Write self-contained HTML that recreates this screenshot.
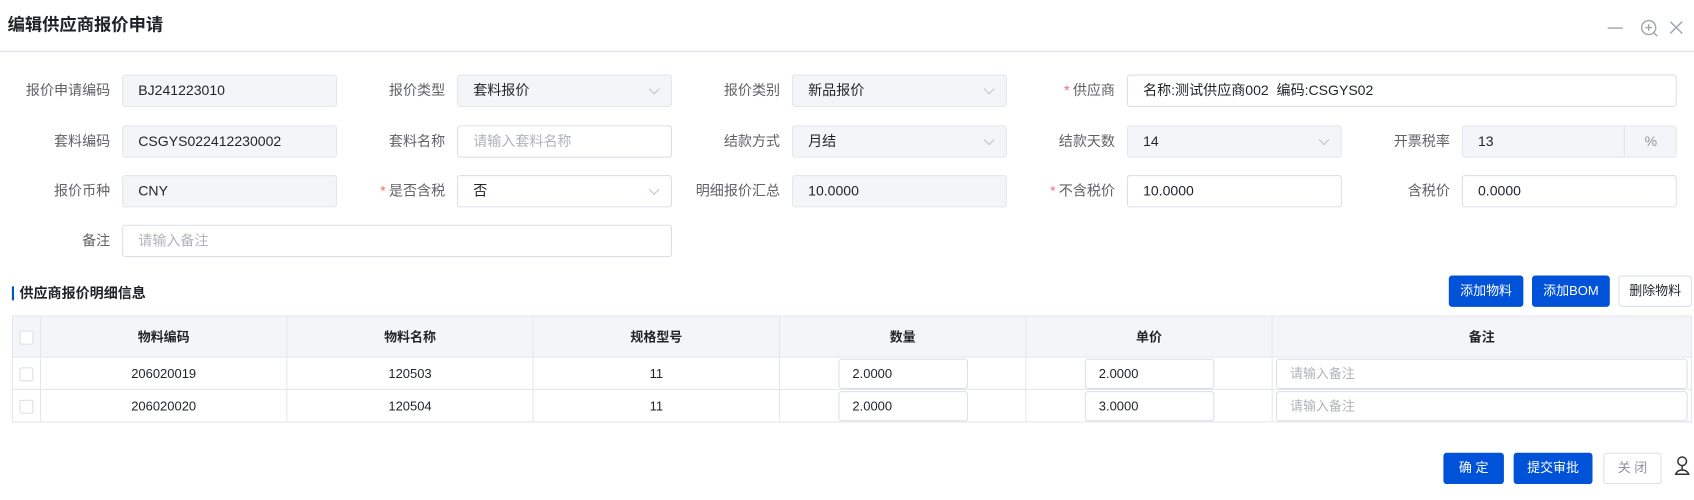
<!DOCTYPE html>
<html><head><meta charset="utf-8"><style>
*{box-sizing:border-box;margin:0;padding:0}
body{width:1694px;height:500px;background:#fff;font-family:"Liberation Sans","Noto Sans CJK SC",sans-serif;font-size:13px;color:#1f2329;position:relative;overflow:hidden}
#w{position:absolute;left:0;top:0;width:1568px;height:463px;transform:scale(1.0804);transform-origin:0 0}
.a{position:absolute}
.lbl{position:absolute;text-align:right;color:#606266;font-size:13px;line-height:30px;width:100px}
.inp{position:absolute;height:30px;border:1px solid #dcdfe6;border-radius:3px;line-height:28px;padding-left:14px;font-size:13px;color:#1f2329;background:#fff}
.dis{background:#f4f5f8;border-color:#e4e7ed}
.ph{color:#b0b3b9}
.arr{position:absolute;right:12px;top:9px;width:7px;height:7px;border-right:1px solid #c0c4cc;border-bottom:1px solid #c0c4cc;transform:rotate(45deg)}
.req{color:#f56c6c;margin-right:3px}
.btn{position:absolute;height:29px;border-radius:3px;color:#fff;background:#0052d9;text-align:center;line-height:29px;font-size:12px}
.wb{background:#fff;color:#1f2329;border:1px solid #dcdfe6;line-height:27px}
table{position:absolute;left:11px;top:292px;border-collapse:collapse;width:1555px}
td,th{border:1px solid #e4e7ed;text-align:center;font-size:12px;height:30px;padding:0}
th{background:#f4f5f8;height:38px;font-weight:bold;color:#1f2329}
.cb{display:inline-block;width:13px;height:13px;border:1px solid #dcdfe6;border-radius:2px;background:#fff;vertical-align:middle}
.ci{height:28px;border:1px solid #dcdfe6;border-radius:3px;text-align:left;line-height:26px;padding-left:12px;margin:0 3px}
</style></head><body><div id="w">
<div class="a" style="left:7px;top:12px;font-size:16px;font-weight:bold;line-height:24px">编辑供应商报价申请</div>
<svg class="a" style="left:1486px;top:16px" width="80" height="20" viewBox="0 0 80 20"><path d="M2 10H16" stroke="#a0a4ab" stroke-width="1.3"/><circle cx="40" cy="9.5" r="6.5" fill="none" stroke="#a0a4ab" stroke-width="1.3"/><path d="M40 6.5v6M37 9.5h6M45 14.5l3 3" stroke="#a0a4ab" stroke-width="1.3"/><path d="M60 4l11 11M71 4L60 15" stroke="#a0a4ab" stroke-width="1.3"/></svg>
<div class="a" style="left:0;top:47px;width:1568px;height:1px;background:#dcdfe6"></div>

<div class="lbl" style="left:2px;top:69px">报价申请编码</div><div class="inp dis" style="left:113px;top:69px;width:199px">BJ241223010</div>
<div class="lbl" style="left:312px;top:69px">报价类型</div><div class="inp dis" style="left:423px;top:69px;width:199px">套料报价<i class="arr"></i></div>
<div class="lbl" style="left:622px;top:69px">报价类别</div><div class="inp dis" style="left:733px;top:69px;width:199px">新品报价<i class="arr"></i></div>
<div class="lbl" style="left:932px;top:69px"><span class="req">*</span>供应商</div><div class="inp" style="left:1043px;top:69px;width:509px">名称:测试供应商002&nbsp;&nbsp;编码:CSGYS02</div>

<div class="lbl" style="left:2px;top:116px">套料编码</div><div class="inp dis" style="left:113px;top:116px;width:199px">CSGYS022412230002</div>
<div class="lbl" style="left:312px;top:116px">套料名称</div><div class="inp ph" style="left:423px;top:116px;width:199px">请输入套料名称</div>
<div class="lbl" style="left:622px;top:116px">结款方式</div><div class="inp dis" style="left:733px;top:116px;width:199px">月结<i class="arr"></i></div>
<div class="lbl" style="left:932px;top:116px">结款天数</div><div class="inp dis" style="left:1043px;top:116px;width:199px">14<i class="arr"></i></div>
<div class="lbl" style="left:1242px;top:116px">开票税率</div><div class="inp dis" style="left:1353px;top:116px;width:199px">13<span class="a" style="left:149px;top:0;width:49px;height:28px;border-left:1px solid #e4e7ed;text-align:center;color:#909399">%</span></div>

<div class="lbl" style="left:2px;top:162px">报价币种</div><div class="inp dis" style="left:113px;top:162px;width:199px">CNY</div>
<div class="lbl" style="left:312px;top:162px"><span class="req">*</span>是否含税</div><div class="inp" style="left:423px;top:162px;width:199px">否<i class="arr"></i></div>
<div class="lbl" style="left:622px;top:162px">明细报价汇总</div><div class="inp dis" style="left:733px;top:162px;width:199px">10.0000</div>
<div class="lbl" style="left:932px;top:162px"><span class="req">*</span>不含税价</div><div class="inp" style="left:1043px;top:162px;width:199px">10.0000</div>
<div class="lbl" style="left:1242px;top:162px">含税价</div><div class="inp" style="left:1353px;top:162px;width:199px">0.0000</div>

<div class="lbl" style="left:2px;top:208px">备注</div><div class="inp ph" style="left:113px;top:208px;width:509px">请输入备注</div>

<div class="a" style="left:11px;top:265px;width:2px;height:13px;background:#0052d9"></div>
<div class="a" style="left:18px;top:263px;font-size:13px;font-weight:bold;line-height:18px">供应商报价明细信息</div>
<div class="btn" style="left:1341px;top:255px;width:69px">添加物料</div>
<div class="btn" style="left:1418px;top:255px;width:72px">添加BOM</div>
<div class="btn wb" style="left:1498px;top:255px;width:68px">删除物料</div>

<table>
<tr><th style="width:26px"><span class="cb"></span></th><th style="width:228px">物料编码</th><th style="width:228px">物料名称</th><th style="width:228px">规格型号</th><th style="width:228px">数量</th><th style="width:228px">单价</th><th>备注</th></tr>
<tr><td><span class="cb"></span></td><td>206020019</td><td>120503</td><td>11</td><td><div class="ci" style="width:120px;margin-left:54px">2.0000</div></td><td><div class="ci" style="width:120px;margin-left:54px">2.0000</div></td><td><div class="ci" style="color:#b0b3b9">请输入备注</div></td></tr>
<tr><td><span class="cb"></span></td><td>206020020</td><td>120504</td><td>11</td><td><div class="ci" style="width:120px;margin-left:54px">2.0000</div></td><td><div class="ci" style="width:120px;margin-left:54px">3.0000</div></td><td><div class="ci" style="color:#b0b3b9">请输入备注</div></td></tr>
</table>

<div class="btn" style="left:1336px;top:419px;width:56px">确 定</div>
<div class="btn" style="left:1401px;top:419px;width:73px">提交审批</div>
<div class="btn wb" style="left:1484px;top:419px;width:54px;color:#909399">关 闭</div>
<svg class="a" style="left:1549px;top:421px" width="16" height="20" viewBox="0 0 16 20"><circle cx="8" cy="6" r="4" fill="none" stroke="#333" stroke-width="1.4"/><path d="M8 10v4M2 18c1-3 3-4 6-4s5 1 6 4z" fill="none" stroke="#333" stroke-width="1.4"/></svg>
</div></body></html>
